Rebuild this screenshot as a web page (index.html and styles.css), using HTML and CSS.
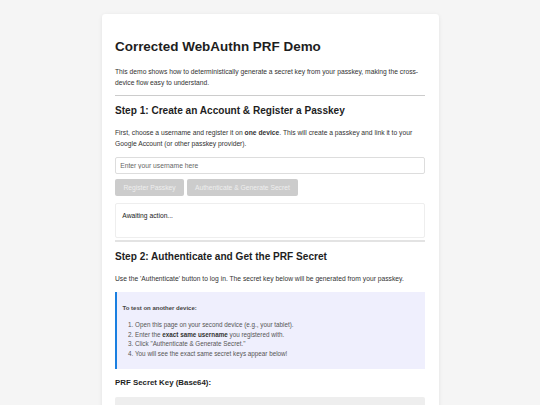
FILE: index.html
```html
<!DOCTYPE html>
<html>
<head>
<meta charset="utf-8">
<link rel="stylesheet" href="styles.css">
</head>
<body>
<div class="card">
  <h1 class="title">Corrected WebAuthn PRF Demo</h1>
  <p class="text intro">This demo shows how to deterministically generate a secret key from your passkey, making the cross-device flow easy to understand.</p>
  <section class="step">
    <h2 class="step-title">Step 1: Create an Account &amp; Register a Passkey</h2>
    <p class="text step-text">First, choose a username and register it on <strong>one device</strong>. This will create a passkey and link it to your Google Account (or other passkey provider).</p>
    <input class="field" type="text" placeholder="Enter your username here">
    <div class="actions">
      <button class="btn" disabled>Register Passkey</button>
      <button class="btn" disabled>Authenticate &amp; Generate Secret</button>
    </div>
    <div class="status">Awaiting action...</div>
  </section>
  <section class="step step-two">
    <h2 class="step-title">Step 2: Authenticate and Get the PRF Secret</h2>
    <p class="text">Use the 'Authenticate' button to log in. The secret key below will be generated from your passkey.</p>
    <div class="info">
      <p class="info-head"><strong>To test on another device:</strong></p>
      <ol class="info-list">
        <li>Open this page on your second device (e.g., your tablet).</li>
        <li>Enter the <strong>exact same username</strong> you registered with.</li>
        <li>Click "Authenticate &amp; Generate Secret."</li>
        <li>You will see the exact same secret keys appear below!</li>
      </ol>
    </div>
    <h3 class="key-title">PRF Secret Key (Base64):</h3>
    <div class="key-box"></div>
  </section>
</div>
</body>
</html>
```
FILE: styles.css
```css
html, body {
  margin: 0;
  padding: 0;
}
body {
  background: #f5f5f5;
  font-family: "Liberation Sans", Arial, sans-serif;
  color: #333;
  font-size: 6.72px;
  line-height: 1.65;
  padding-top: 14px;
}
.card {
  width: 310px;
  margin: 0 auto;
  padding: 13.5px;
  background: #fff;
  border-radius: 3.4px;
  box-shadow: 0 1px 4px rgba(0,0,0,0.08);
}
.title {
  font-size: 13.44px;
  line-height: 1.2;
  margin: 11px 0 11px;
  color: #1e1e1e;
}
.text {
  margin: 0;
}
.intro {
  margin-bottom: 7.5px;
}
.step {
  border-top: 1px solid #ccc;
}
.step-two {
  border-top: 2px solid #e3e3e3;
  margin-top: 2.5px;
}
.step-title {
  font-size: 10.08px;
  line-height: 1.2;
  margin: 9px 0 9.8px;
  color: #1e1e1e;
}
.step-text {
  margin-bottom: 7.6px;
}
.field {
  display: block;
  box-sizing: border-box;
  width: 100%;
  height: 17px;
  padding: 0 4.2px;
  border: 1px solid #ddd;
  border-radius: 2px;
  font-family: inherit;
  font-size: 6.72px;
  color: #333;
  margin: 0 0 5px;
}
.field::placeholder {
  color: #666;
}
.actions {
  display: flex;
  gap: 2.5px;
  margin-bottom: 7px;
}
.btn {
  height: 17px;
  padding: 0 8.4px;
  border: none;
  border-radius: 2px;
  background: #ccc;
  color: #eee;
  font-family: inherit;
  font-size: 6.72px;
}
.status {
  box-sizing: border-box;
  height: 35px;
  border: 1px solid #eee;
  border-radius: 2px;
  padding: 5.6px 6.3px;
  color: #222;
}
.info {
  background: #efeffd;
  border-left: 2px solid #1a7fe0;
  padding: 7.5px 5.5px 4.5px;
  margin: 8px 0 9.3px;
  font-size: 6.3px;
  line-height: 1.5;
  color: #555;
}
.info-head {
  margin: 4.2px 0 7.4px;
  font-size: 6px;
  color: #444;
}
.info-list {
  margin: 0 0 6px;
  padding-left: 12.5px;
}
.info-list strong {
  color: #333;
}
.key-title {
  font-size: 7.86px;
  line-height: 1.2;
  margin: 0 0 9.3px;
  color: #1e1e1e;
}
.key-box {
  height: 30px;
  background: #eee;
  border-radius: 2px;
}
```
